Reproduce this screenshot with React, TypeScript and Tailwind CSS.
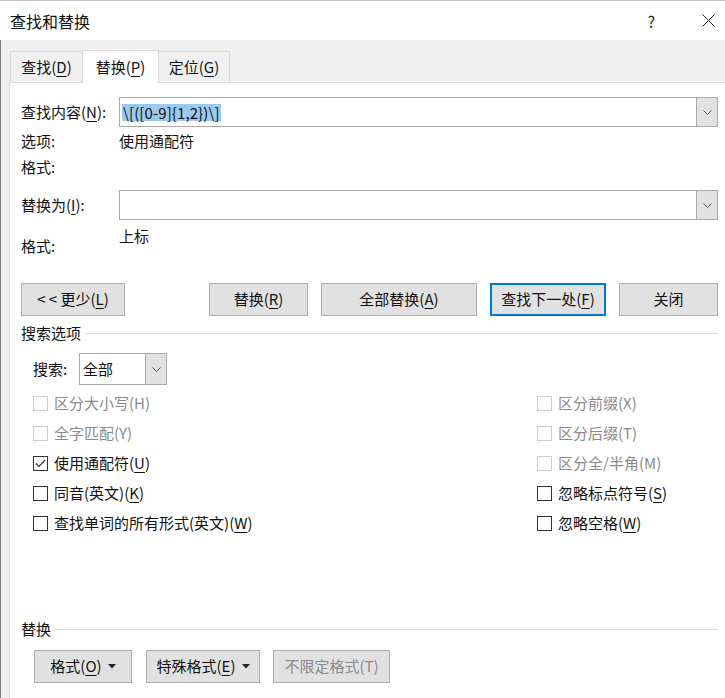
import React from "react";

const FONT = { fontFamily: '"Noto Sans CJK SC", "Noto Sans", sans-serif' };

function U({ children }: { children: React.ReactNode }) {
  return <span className="underline underline-offset-[3px] decoration-1">{children}</span>;
}

function Chevron() {
  return (
    <svg width="9" height="5" viewBox="0 0 9 5" fill="none">
      <path d="M0.5 0.5 L4.5 4.5 L8.5 0.5" stroke="#555" strokeWidth="1" />
    </svg>
  );
}

function Caret() {
  return (
    <svg width="8" height="5" viewBox="0 0 8 5" className="ml-[6px]">
      <path d="M0 0 L8 0 L4 4.5 Z" fill="#222" />
    </svg>
  );
}

function Btn({
  w,
  children,
  primary,
  disabled,
}: {
  w: string;
  children: React.ReactNode;
  primary?: boolean;
  disabled?: boolean;
}) {
  return (
    <div
      className={
        "h-[33px] bg-[#e1e1e1] flex items-center justify-center text-[15px] shrink-0 " +
        w +
        (primary ? " border-2 border-[#0078d7]" : " border border-[#adadad]") +
        (disabled ? " text-[#8a8a8a]" : " text-[#111]")
      }
    >
      {children}
    </div>
  );
}

function Check({ label, checked, disabled }: { label: React.ReactNode; checked?: boolean; disabled?: boolean }) {
  return (
    <div className="h-[30px] flex items-center">
      <div
        className={
          "w-[15px] h-[15px] border bg-white flex items-center justify-center shrink-0 " +
          (disabled ? "border-[#cccccc]" : "border-[#333333]")
        }
      >
        {checked && (
          <svg width="13" height="13" viewBox="0 0 13 13" fill="none">
            <path d="M2 6.5 L5 9.5 L11 3" stroke="#333" strokeWidth="1.2" />
          </svg>
        )}
      </div>
      <span className={"ml-[6px] text-[15px] " + (disabled ? "text-[#8a8a8a]" : "text-[#111]")}>{label}</span>
    </div>
  );
}

function Combo({ children }: { children?: React.ReactNode }) {
  return (
    <div className="flex-1 h-[30px] border border-[#a9a9a9] bg-white flex items-stretch">
      <div className="flex-1 flex items-center pl-[2px] text-[15px] text-[#111]">{children}</div>
      <div className="w-[21px] border-l border-[#a9a9a9] bg-[#e1e1e1] flex items-center justify-center">
        <Chevron />
      </div>
    </div>
  );
}

export default function App() {
  return (
    <div className="w-[725px] h-[698px] overflow-hidden flex flex-col bg-[#f0f0f0] text-[#111]" style={FONT}>
      <div className="h-[1px] bg-[#c4c4c4] shrink-0" />
      {/* Title bar */}
      <div className="h-[39px] bg-white flex items-center shrink-0 pl-[10px]">
        <span className="text-[16px] text-[#111]">查找和替换</span>
        <div className="flex-1" />
        <span className="text-[16px] text-[#222] mr-[47px]">?</span>
        <svg width="13" height="13" viewBox="0 0 13 13" className="mr-[10px]">
          <path d="M0.5 0.5 L12.5 12.5 M12.5 0.5 L0.5 12.5" stroke="#222" strokeWidth="1" />
        </svg>
      </div>
      {/* Body */}
      <div className="flex-1 flex flex-col border-l border-[#7a7a7a]">
        {/* Tabs */}
        <div className="h-[32px] mt-[10px] flex items-end pl-[9px] shrink-0">
          <div className="h-[31px] w-[72px] border-l border-t border-[#d9d9d9] bg-[#f0f0f0] flex items-center justify-center text-[15px]">
            查找(<U>D</U>)
          </div>
          <div className="h-[33px] -mb-px w-[77px] border-l border-t border-r border-[#d9d9d9] bg-white relative z-10 flex items-center justify-center text-[15px]">
            替换(<U>P</U>)
          </div>
          <div className="h-[31px] w-[71px] border-t border-r border-[#d9d9d9] bg-[#f0f0f0] flex items-center justify-center text-[15px]">
            定位(<U>G</U>)
          </div>
        </div>
        {/* Panel */}
        <div className="flex-1 ml-[8px] border-l border-t border-[#d9d9d9] bg-white pl-[11px] pr-[7px] flex flex-col">
          {/* Find row */}
          <div className="mt-[14px] flex items-center h-[30px]">
            <div className="w-[98px] text-[15px]">
              查找内容(<U>N</U>):
            </div>
            <Combo>
              <span className="bg-[#99c9ef] leading-[17px] px-[1px] tracking-[0.1px]">{"\\[([0-9]{1,2})\\]"}</span>
            </Combo>
          </div>
          <div className="mt-[4px] h-[20px] flex items-center text-[15px]">
            <div className="w-[98px]">选项:</div>
            <div>使用通配符</div>
          </div>
          <div className="mt-[6px] h-[20px] flex items-center text-[15px]">
            <div className="w-[98px]">格式:</div>
          </div>
          {/* Replace row */}
          <div className="mt-[13px] flex items-center h-[30px]">
            <div className="w-[98px] text-[15px]">
              替换为(<U>I</U>):
            </div>
            <Combo />
          </div>
          <div className="mt-[6px] h-[30px] flex text-[15px]">
            <div className="w-[98px] self-end leading-[20px]">格式:</div>
            <div className="self-start leading-[20px]">上标</div>
          </div>
          {/* Buttons */}
          <div className="mt-[27px] flex items-center">
            <Btn w="w-[104px]">
              {"< < "}更少(<U>L</U>)
            </Btn>
            <div className="w-[84px]" />
            <Btn w="w-[99px]">
              替换(<U>R</U>)
            </Btn>
            <div className="w-[13px]" />
            <Btn w="w-[156px]">
              全部替换(<U>A</U>)
            </Btn>
            <div className="w-[13px]" />
            <Btn w="w-[116px]" primary>
              查找下一处(<U>F</U>)
            </Btn>
            <div className="w-[13px]" />
            <Btn w="w-[99px]">关闭</Btn>
          </div>
          {/* Search options heading */}
          <div className="mt-[7px] h-[20px] flex items-center">
            <span className="text-[15px]">搜索选项</span>
            <div className="flex-1 ml-[5px] h-px bg-[#dcdcdc]" />
          </div>
          {/* Search select */}
          <div className="mt-[10px] h-[32px] flex items-center pl-[12px]">
            <span className="text-[15px] w-[46px]">搜索:</span>
            <div className="w-[88px] h-[32px] border border-[#a9a9a9] bg-white flex items-stretch">
              <div className="flex-1 flex items-center pl-[3px] text-[15px]">全部</div>
              <div className="w-[21px] border-l border-[#a9a9a9] bg-[#e1e1e1] flex items-center justify-center">
                <Chevron />
              </div>
            </div>
          </div>
          {/* Checkboxes */}
          <div className="mt-[3px] flex pl-[12px]">
            <div className="w-[504px] flex flex-col">
              <Check disabled label="区分大小写(H)" />
              <Check disabled label="全字匹配(Y)" />
              <Check
                checked
                label={
                  <>
                    使用通配符(<U>U</U>)
                  </>
                }
              />
              <Check
                label={
                  <>
                    同音(英文)(<U>K</U>)
                  </>
                }
              />
              <Check
                label={
                  <>
                    查找单词的所有形式(英文)(<U>W</U>)
                  </>
                }
              />
            </div>
            <div className="flex flex-col">
              <Check disabled label="区分前缀(X)" />
              <Check disabled label="区分后缀(T)" />
              <Check disabled label="区分全/半角(M)" />
              <Check
                label={
                  <>
                    忽略标点符号(<U>S</U>)
                  </>
                }
              />
              <Check
                label={
                  <>
                    忽略空格(<U>W</U>)
                  </>
                }
              />
            </div>
          </div>
          {/* Replace section */}
          <div className="mt-[81px] h-[20px] flex items-center">
            <span className="text-[15px]">替换</span>
            <div className="flex-1 ml-[5px] h-px bg-[#dcdcdc]" />
          </div>
          <div className="mt-[11px] flex items-center pl-[13px]">
            <Btn w="w-[98px]">
              格式(<U>O</U>)
              <Caret />
            </Btn>
            <div className="w-[14px]" />
            <Btn w="w-[114px]">
              特殊格式(<U>E</U>)
              <Caret />
            </Btn>
            <div className="w-[13px]" />
            <Btn w="w-[117px]" disabled>
              不限定格式(T)
            </Btn>
          </div>
        </div>
      </div>
    </div>
  );
}
